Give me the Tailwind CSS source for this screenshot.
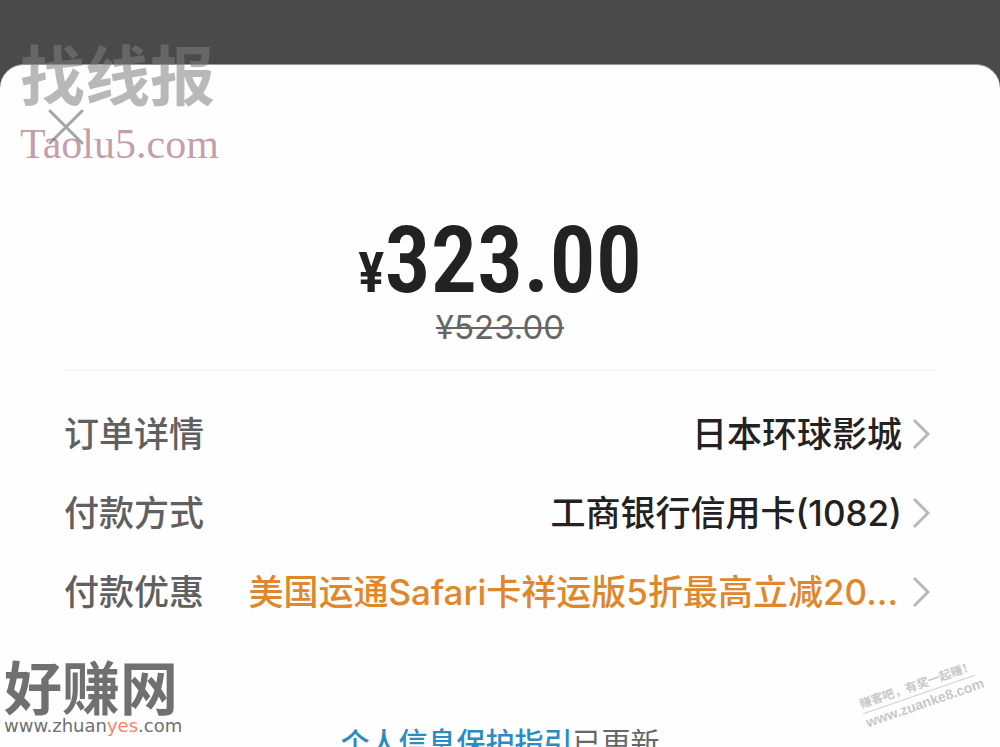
<!DOCTYPE html>
<html lang="zh-CN">
<head>
<meta charset="utf-8">
<meta name="viewport" content="width=device-width, initial-scale=1">
<title>付款</title>
<script src="https://cdn.jsdelivr.net/npm/@tailwindcss/browser@4"></script>
</head>
<body class="h-screen overflow-hidden bg-[#4a4a4a] pt-16 font-['Inter','Noto_Sans_CJK_SC',sans-serif] relative">
<main class="min-h-full rounded-t-[24px] bg-[#fefefe] px-[60px] pt-11 border-t border-[#999]">
  <button type="button" aria-label="关闭" class="block -ml-3 size-9">
    <svg viewBox="0 0 36 36" class="size-9" fill="none" stroke="#a3a5a5" stroke-width="3" stroke-linecap="round"><path d="M2 2L34 34M34 2L2 34"/></svg>
  </button>

  <section class="flex flex-col items-center pt-20">
    <p class="flex items-baseline font-['Roboto_Condensed','Liberation_Sans_Narrow',sans-serif] font-semibold leading-[72px] text-[#222]">
      <span class="text-[56px]">¥</span>
      <span class="text-[92px]">323.00</span>
    </p>
    <s class="text-[33px] leading-9 text-[#666] decoration-2 font-normal">¥523.00</s>
  </section>

  <hr class="mt-6 border-t-2 border-[#f8f8f8]">

  <section class="pt-[23px]">
    <button type="button" class="flex h-[79px] w-full items-center justify-between pl-1 pr-2.5 text-[35px] leading-10">
      <span class="shrink-0 font-medium text-[#606060]">订单详情</span>
      <span class="flex min-w-0 items-center gap-2.5 font-medium text-[#222]"><span>日本环球影城</span>
      <svg viewBox="0 0 18 32" class="h-8 w-[18px] shrink-0" fill="none" stroke="#b8b8b8" stroke-width="3"><path d="M2 2L16 16L2 30"/></svg></span>
    </button>
    <button type="button" class="flex h-[79px] w-full items-center justify-between pl-1 pr-2.5 text-[35px] leading-10">
      <span class="shrink-0 font-medium text-[#606060]">付款方式</span>
      <span class="flex min-w-0 items-center gap-2.5 font-medium text-[#222]"><span>工商银行信用卡(1082)</span>
      <svg viewBox="0 0 18 32" class="h-8 w-[18px] shrink-0" fill="none" stroke="#b8b8b8" stroke-width="3"><path d="M2 2L16 16L2 30"/></svg></span>
    </button>
    <button type="button" class="flex h-[79px] w-full items-center justify-between pl-1 pr-2.5 text-[35px] leading-10">
      <span class="shrink-0 font-medium text-[#606060]">付款优惠</span>
      <span class="flex min-w-0 items-center gap-3.5 font-medium text-[#e0872b]"><span class="whitespace-nowrap">美国运通Safari卡祥运版5折最高立减20...</span>
      <svg viewBox="0 0 18 32" class="h-8 w-[18px] shrink-0" fill="none" stroke="#b8b8b8" stroke-width="3"><path d="M2 2L16 16L2 30"/></svg></span>
    </button>
  </section>

  <p class="mt-[93px] text-center text-[29px] leading-10 text-[#666]"><a href="#" class="font-medium text-[#2b8cc4]">个人信息保护指引</a>已更新</p>
</main>

<!-- Watermarks over the sheet -->
<div class="pointer-events-none absolute left-5 top-11 text-[#7d7d7d]/55">
  <p class="text-[65px] leading-[66px] font-bold">找线报</p>
  <p class="font-['Liberation_Serif',serif] text-[42px] leading-[68px] text-[#8a4055]/50">Taolu5.com</p>
</div>
<div class="pointer-events-none absolute left-1 top-[662px] text-[#707070]">
  <p class="text-[58px] leading-[54px] font-bold">好赚网</p>
  <p class="font-['DejaVu_Sans',sans-serif] text-[18px] leading-5">www.zhuan<span class="text-[#fa8465]">yes</span>.com</p>
</div>
<div class="pointer-events-none absolute left-[860px] top-[676px] w-[118px] -rotate-[19deg] text-center text-[#c8c8c8]">
  <p class="whitespace-nowrap border-b border-[#d0d0d0] text-[12px] leading-[18px] font-bold">赚客吧，有奖一起赚！</p>
  <p class="font-['Liberation_Sans',sans-serif] text-[14px] leading-[18px] font-bold">www.zuanke8.com</p>
</div>
</body>
</html>
